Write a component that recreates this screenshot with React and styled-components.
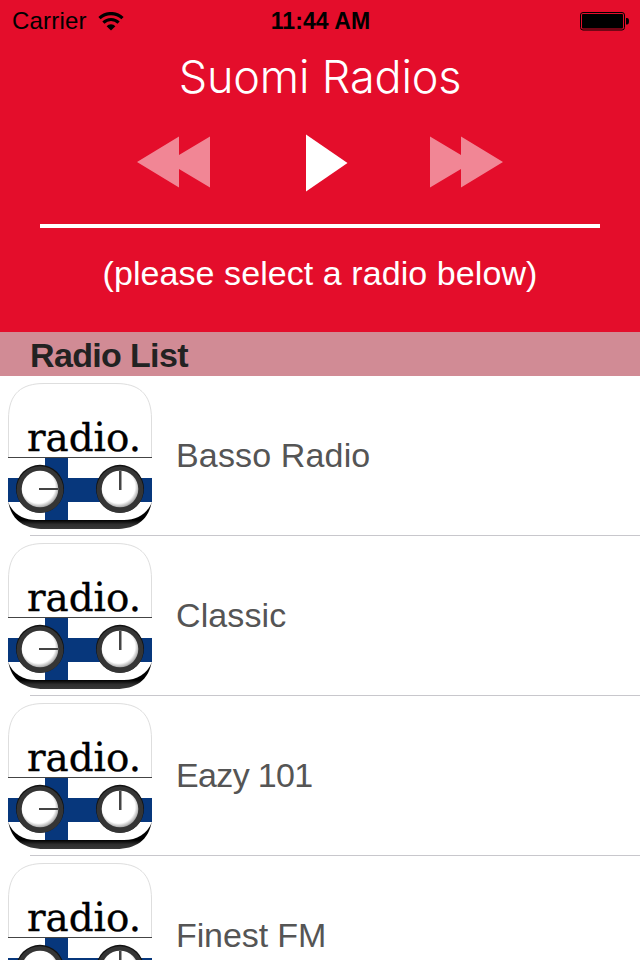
import React from "react";
import styled, { createGlobalStyle } from "styled-components";

const GlobalStyle = createGlobalStyle`
  body {
    margin: 0;
    background: #fff;
    font-family: "Liberation Sans", Arial, sans-serif;
  }
`;

const Screen = styled.div`
  width: 640px;
  height: 960px;
  overflow: hidden;
  background: #fff;
`;

const Header = styled.header`
  height: 332px;
  background: #e40d2b;
  color: #fff;
`;

const StatusBar = styled.div`
  display: grid;
  grid-template-columns: 1fr auto 1fr;
  align-items: center;
  height: 40px;
  padding: 0 11px 0 12px;
  color: #000;
  font-size: 24px;
  line-height: 42px;
`;

const Carrier = styled.div`
  display: flex;
  align-items: center;
  gap: 11px;
  letter-spacing: 0.2px;
`;

const Clock = styled.div`
  font-weight: bold;
  font-size: 23px;
  letter-spacing: 0.1px;
`;

const Battery = styled.svg`
  justify-self: end;
`;

const Title = styled.h1`
  margin: 0;
  padding-top: 8px;
  font-family: Inter, "Liberation Sans", sans-serif;
  font-size: 45px;
  font-weight: 300;
  line-height: 58px;
  letter-spacing: -0.15px;
  text-align: center;
`;

const Controls = styled.div`
  display: flex;
  justify-content: space-between;
  align-items: center;
  height: 58px;
  padding: 28px 137px 32px;
`;

const Control = styled.button`
  display: flex;
  padding: ${(props) => (props.$dim ? "0 0 2px" : "0 0 0 14px")};
  border: 0;
  background: none;
  color: #fff;
  opacity: ${(props) => (props.$dim ? 0.5 : 1)};
`;

const Volume = styled.div`
  height: 4px;
  margin: 0 40px;
  background: #fff;
`;

const Message = styled.p`
  margin: 0;
  padding-top: 25px;
  font-size: 34px;
  line-height: 40px;
  letter-spacing: 0.07px;
  text-align: center;
`;

const SectionTitle = styled.h2`
  height: 44px;
  margin: 0;
  padding-left: 30px;
  background: #d18b95;
  color: #222;
  font-size: 34px;
  line-height: 47px;
  letter-spacing: -0.65px;
`;

const List = styled.ul`
  margin: 0;
  padding: 0;
  list-style: none;
`;

const Row = styled.li`
  display: flex;
  height: 160px;
  padding-left: 8px;
  gap: 22px;
  background: linear-gradient(#c8c7cc, #c8c7cc) 30px 159px / 610px 1px no-repeat;
`;

const Station = styled.span`
  padding-left: 2px;
  color: #555;
  font-size: 34px;
  line-height: 158px;
  letter-spacing: ${(props) => props.$spacing}px;
`;

const Wifi = () => (
  <svg width="26" height="19" viewBox="0 0 26 19">
    <path d="M1.5 6.2 A16.5 16.5 0 0 1 24.5 6.2" fill="none" stroke="#000" strokeWidth="3.2" />
    <path d="M5.4 10.6 A10.6 10.6 0 0 1 20.6 10.6" fill="none" stroke="#000" strokeWidth="3" />
    <path d="M13 18.5 L8.6 14.2 A6 6 0 0 1 17.4 14.2 Z" />
  </svg>
);

const Rewind = () => (
  <svg width="73" height="52" viewBox="0 0 73 52">
    <path d="M0 26 L42 0.5 V19 L73 0.5 V51.5 L42 33 V51.5 Z" fill="currentColor" />
  </svg>
);

const Forward = () => (
  <svg width="73" height="52" viewBox="0 0 73 52">
    <path d="M73 26 L31 0.5 V19 L0 0.5 V51.5 L31 33 V51.5 Z" fill="currentColor" />
  </svg>
);

const Play = () => (
  <svg width="42" height="58" viewBox="0 0 42 58">
    <path d="M0 0.5 L41.5 29 L0 57.5 Z" fill="currentColor" />
  </svg>
);

const Knob = ({ x, children }) => (
  <g>
    <circle cx={x} cy="112.8" r="24" fill="#111" />
    <circle cx={x} cy="113.7" r="23.4" fill="#353535" />
    <circle cx={x} cy="113" r="18.3" fill="url(#knob)" />
    {children}
  </g>
);

const RadioIcon = () => (
  <svg width="144" height="160" viewBox="8 0 144 160">
    <defs>
      <linearGradient id="base" x1="0" y1="144" x2="0" y2="153" gradientUnits="userSpaceOnUse">
        <stop offset="0" stopColor="#000" />
        <stop offset="0.5" stopColor="#2e2e2e" />
        <stop offset="1" stopColor="#383838" />
      </linearGradient>
      <radialGradient id="knob" cx="0.46" cy="0.44" r="0.56">
        <stop offset="0.8" stopColor="#fff" />
        <stop offset="1" stopColor="#a8a8a8" />
      </radialGradient>
      <clipPath id="face">
        <path d="M8 82 H152 V126 C147 138 137 144 124 144 H36 C23 144 13 138 8 126 Z" />
      </clipPath>
    </defs>
    <path
      d="M8.5 125 V43 C8.5 17 22 7.5 44 7.5 H116 C138 7.5 151.5 17 151.5 43 V125"
      fill="#fff"
      stroke="#dedede"
    />
    <path d="M8 124 H152 C149 145 135 153 116 153 H44 C25 153 11 145 8 124 Z" fill="url(#base)" />
    <g clipPath="url(#face)">
      <rect x="8" y="82" width="144" height="62" fill="#fff" />
      <rect x="8" y="102" width="144" height="24" fill="#07377c" />
      <rect x="45" y="82" width="23" height="62" fill="#07377c" />
    </g>
    <rect x="8" y="81" width="144" height="1" fill="#444" />
    <Knob x={40}>
      <rect x="39" y="112" width="19" height="2" fill="#444" />
    </Knob>
    <Knob x={120}>
      <rect x="119" y="95" width="2.5" height="19" fill="#444" />
    </Knob>
    <text
      x="27"
      y="75"
      fontFamily="'DejaVu Serif', serif"
      fontSize="40"
      textLength="114"
      lengthAdjust="spacingAndGlyphs"
      stroke="#000"
      strokeWidth="0.35"
      strokeLinejoin="round"
    >
      radio.
    </text>
  </svg>
);

const stations = [
  { name: "Basso Radio", spacing: 0.15 },
  { name: "Classic", spacing: 0.1 },
  { name: "Eazy 101", spacing: -0.65 },
  { name: "Finest FM", spacing: -0.1 },
];

const App = () => (
  <>
    <GlobalStyle />
    <Screen>
      <Header>
        <StatusBar>
          <Carrier>
            Carrier
            <Wifi />
          </Carrier>
          <Clock>11:44 AM</Clock>
          <Battery width="50" height="20" viewBox="0 0 50 20">
            <rect x="1.5" y="1.5" width="44" height="17.5" rx="2.5" fill="none" stroke="#000" />
            <rect x="3" y="3" width="41" height="14.5" rx="1" />
            <path d="M47 7 H48 Q50 7 50 10 Q50 13.5 48 13.5 H47 Z" />
          </Battery>
        </StatusBar>
        <Title>Suomi Radios</Title>
        <Controls>
          <Control $dim aria-label="Previous">
            <Rewind />
          </Control>
          <Control aria-label="Play">
            <Play />
          </Control>
          <Control $dim aria-label="Next">
            <Forward />
          </Control>
        </Controls>
        <Volume />
        <Message>(please select a radio below)</Message>
      </Header>
      <SectionTitle>Radio List</SectionTitle>
      <List>
        {stations.map(({ name, spacing }) => (
          <Row key={name}>
            <RadioIcon />
            <Station $spacing={spacing}>{name}</Station>
          </Row>
        ))}
      </List>
    </Screen>
  </>
);

export default App;
